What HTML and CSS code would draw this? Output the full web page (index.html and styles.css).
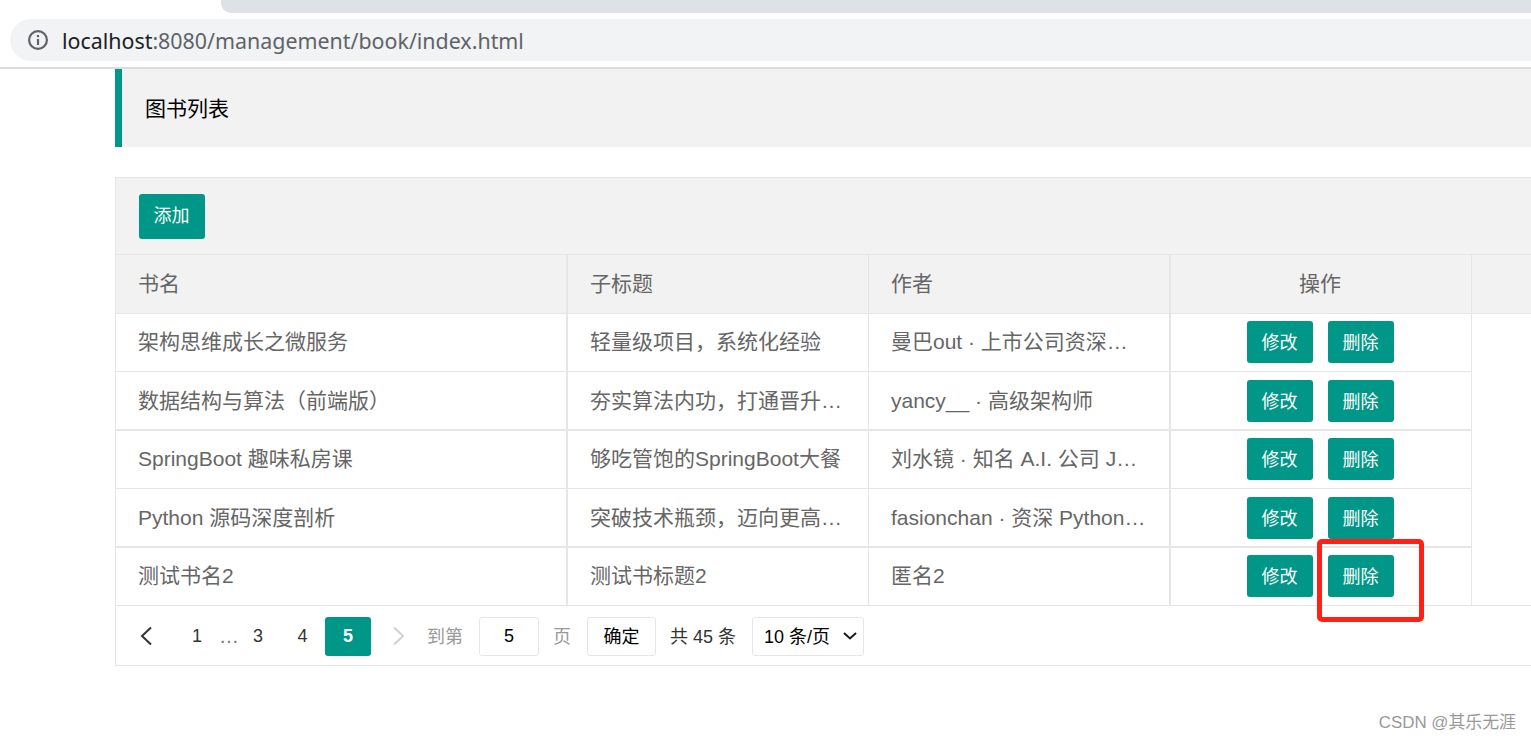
FILE: index.html
```html
<!DOCTYPE html>
<html>
<head>
	<meta charset="utf-8">
	<title>图书列表</title>
	<link rel="stylesheet" href="styles.css">
</head>

<body>
	<!-- browser chrome -->
	<div class="tabstrip"><div class="tab"></div></div>
	<div class="toolbar">
		<div class="addressbar">
			<svg class="info" width="20" height="20" viewBox="0 0 20 20">
				<circle cx="10" cy="10" r="8.9" fill="none" stroke="#5f6368" stroke-width="2.2"/>
				<rect x="8.9" y="9" width="2.2" height="6" fill="#5f6368"/>
				<rect x="8.9" y="5" width="2.2" height="2.2" fill="#5f6368"/>
			</svg>
			<span class="host">localhost</span><span class="path">:8080/management/book/index.html</span>
		</div>
	</div>

	<div class="page">
		<div class="quote">图书列表</div>

		<div class="panel">
			<div class="tools">
				<button class="btn btn-add">添加</button>
			</div>
			<table class="books">
				<colgroup>
					<col class="col-a"><col class="col-b"><col class="col-c"><col class="col-d"><col>
				</colgroup>
				<tr class="head">
					<th class="bold">书名</th>
					<th>子标题</th>
					<th class="bold">作者</th>
					<th class="center">操作</th>
					<th class="blank"></th>
				</tr>
				<tr>
					<td class="bold">架构思维成长之微服务</td>
					<td>轻量级项目&#xFF0C;系统化经验</td>
					<td class="bold">曼巴out · 上市公司资深…</td>
					<td class="center"><button class="btn">修改</button><button class="btn">删除</button></td>
					<td class="blank"></td>
				</tr>
				<tr class="thick">
					<td class="bold">数据结构与算法&#xFF08;前端版&#xFF09;</td>
					<td>夯实算法内功&#xFF0C;打通晋升…</td>
					<td class="bold">yancy__ · 高级架构师</td>
					<td class="center"><button class="btn">修改</button><button class="btn">删除</button></td>
					<td class="blank"></td>
				</tr>
				<tr>
					<td class="bold">SpringBoot 趣味私房课</td>
					<td>够吃管饱的SpringBoot大餐</td>
					<td class="bold">刘水镜 · 知名 A.I. 公司 J…</td>
					<td class="center"><button class="btn">修改</button><button class="btn">删除</button></td>
					<td class="blank"></td>
				</tr>
				<tr class="thick">
					<td class="bold">Python 源码深度剖析</td>
					<td>突破技术瓶颈&#xFF0C;迈向更高…</td>
					<td class="bold">fasionchan · 资深 Python…</td>
					<td class="center"><button class="btn">修改</button><button class="btn">删除</button></td>
					<td class="blank"></td>
				</tr>
				<tr class="last">
					<td class="bold">测试书名2</td>
					<td>测试书标题2</td>
					<td class="bold">匿名2</td>
					<td class="center"><button class="btn">修改</button><button class="btn">删除</button></td>
					<td class="blank"></td>
				</tr>
			</table>
			<div class="pager">
				<a class="pg pg-arrow">
					<svg width="14" height="20" viewBox="0 0 14 20"><path d="M11 1.5 2 10l9 8.5" fill="none" stroke="#333" stroke-width="2"/></svg>
				</a>
				<a class="pg pg-first">1</a>
				<span class="pg-dots">…</span>
				<a class="pg pg-three">3</a>
				<a class="pg pg-four">4</a>
				<a class="pg pg-on">5</a>
				<a class="pg pg-arrow pg-next">
					<svg width="14" height="20" viewBox="0 0 14 20"><path d="M2 1.5 11 10l-9 8.5" fill="none" stroke="#d2d2d2" stroke-width="2"/></svg>
				</a>
				<span class="pg-label">到第</span>
				<input class="pg-input" value="5">
				<span class="pg-label pg-unit">页</span>
				<button class="pg-ok">确定</button>
				<span class="pg-count">共 45 条</span>
				<div class="pg-size">
					<span>10 条/页</span>
					<svg width="14" height="8" viewBox="0 0 14 8"><path d="M1 1l6 5.5L13 1" fill="none" stroke="#1a1a1a" stroke-width="2"/></svg>
				</div>
			</div>
		</div>
	</div>

	<!-- annotation drawn over the screenshot -->
	<div class="redbox"></div>
	<div class="mark">CSDN @其乐无涯</div>
</body>

</html>
```

FILE: styles.css
```css
html,
body {
	margin: 0;
	height: 739px;
	overflow: hidden;
	background-color: #fff;
}

body {
	position: relative;
	font-family: "Liberation Sans", "Noto Sans CJK SC", sans-serif;
	color: #666;
}

/* browser chrome */
.tabstrip {
	height: 19px;
	padding-left: 221px;
}

.tab {
	height: 13px;
	background-color: #dee1e6;
	border-bottom-left-radius: 10px;
}

.toolbar {
	height: 48px;
	padding-left: 10px;
	border-bottom: 2px solid #dcdcdc;
}

.addressbar {
	display: flex;
	align-items: center;
	height: 42px;
	padding-left: 18px;
	background-color: #f1f3f4;
	border-radius: 21px 0 0 21px;
	font-family: "Noto Sans", sans-serif;
	font-size: 21.4px;
}

.info {
	margin-right: 14px;
}

.host {
	color: #202124;
}

.path {
	color: #5f6368;
}

/* page */
.page {
	padding-left: 115px;
}

.quote {
	height: 78px;
	line-height: 80px;
	padding-left: 23px;
	margin-bottom: 30px;
	background-color: #f2f2f2;
	border-left: 7px solid #009688;
	font-size: 21px;
	color: #000;
}

.panel {
	border: 1px solid #e6e6e6;
	border-right: none;
}

.tools {
	height: 76px;
	padding: 16px 0 0 23px;
	box-sizing: border-box;
	background-color: #f2f2f2;
}

.btn {
	width: 66px;
	height: 42px;
	padding: 0 1px 2px 0;
	background-color: #009688;
	color: #fff;
	border: none;
	border-radius: 3px;
	font-family: inherit;
	font-size: 18px;
}

.btn + .btn {
	margin-left: 15px;
}

.btn-add {
	height: 45px;
	padding-bottom: 5px;
}

.books {
	width: 100%;
	table-layout: fixed;
	border-collapse: separate;
	border-spacing: 0;
	font-size: 21px;
}

.col-a {
	width: 452px;
}

.col-b {
	width: 301px;
}

.col-c {
	width: 302px;
}

.col-d {
	width: 301px;
}

th,
td {
	padding: 0 0 5px 22px;
	box-sizing: border-box;
	border-bottom: 1px solid #e6e6e6;
	border-right: 1px solid #e6e6e6;
	font-weight: normal;
	text-align: left;
	white-space: nowrap;
	overflow: hidden;
}

th {
	height: 60px;
	background-color: #f2f2f2;
	border-top: 1px solid #e6e6e6;
}

td {
	height: 58px;
}

.thick td {
	height: 59px;
	padding-top: 1px;
	padding-bottom: 4px;
	border-bottom-width: 2px;
}

.bold {
	border-right-width: 2px;
}

th.center {
	padding: 0 2px 5px 0;
	text-align: center;
}

td.center {
	padding: 0 1px 1px 0;
	text-align: center;
}

.thick td.center {
	padding: 1px 1px 0 0;
}

td.center .btn {
	vertical-align: middle;
}

td.blank {
	border-right: none;
	border-bottom: none;
}

.last td.blank {
	border-bottom: 1px solid #e6e6e6;
}

th.blank {
	border-right: none;
}

/* pagination */
.pager {
	display: flex;
	align-items: center;
	height: 59px;
	padding: 1px 0 0 8px;
	box-sizing: border-box;
	font-size: 18px;
	color: #333;
}

.pg {
	display: flex;
	align-items: center;
	justify-content: center;
	height: 39px;
	width: 46px;
}

.pg-first {
	margin-left: 4px;
}

.pg-dots {
	width: 16px;
	margin-left: -1px;
	margin-right: 1px;
	text-align: center;
	font-size: 20px;
	color: #777;
}

.pg-three {
	width: 44px;
}

.pg-four {
	width: 45px;
}

.pg-on {
	background-color: #009688;
	color: #fff;
	font-weight: bold;
	border-radius: 3px;
}

.pg-next {
	margin-left: 5px;
}

.pg-label {
	margin-left: 5px;
	padding-bottom: 3px;
	color: #999;
}

.pg-input {
	width: 60px;
	height: 39px;
	margin-left: 16px;
	padding: 0;
	box-sizing: border-box;
	border: 1px solid #e6e6e6;
	border-radius: 3px;
	text-align: center;
	font-family: inherit;
	font-size: 18px;
	color: #000;
}

.pg-unit {
	margin-left: 14px;
}

.pg-ok {
	width: 69px;
	height: 39px;
	margin-left: 16px;
	padding: 0 0 3px;
	background-color: #fff;
	border: 1px solid #e6e6e6;
	border-radius: 3px;
	font-family: inherit;
	font-size: 18px;
	color: #000;
}

.pg-count {
	margin-left: 14px;
	padding-bottom: 3px;
}

.pg-size {
	display: flex;
	align-items: center;
	justify-content: space-between;
	width: 112px;
	height: 39px;
	margin-left: 16px;
	padding: 0 6px 0 11px;
	box-sizing: border-box;
	background-color: #fff;
	border: 1px solid #e6e6e6;
	border-radius: 3px;
	color: #000;
}

.pg-size span {
	padding-bottom: 3px;
}

/* annotation */
.redbox {
	position: absolute;
	left: 1317px;
	top: 539px;
	width: 107px;
	height: 83px;
	box-sizing: border-box;
	border: 5px solid #ff2116;
	border-radius: 5px;
}

.mark {
	position: absolute;
	right: 15px;
	top: 708px;
	font-size: 16.9px;
	color: #999;
}
```
